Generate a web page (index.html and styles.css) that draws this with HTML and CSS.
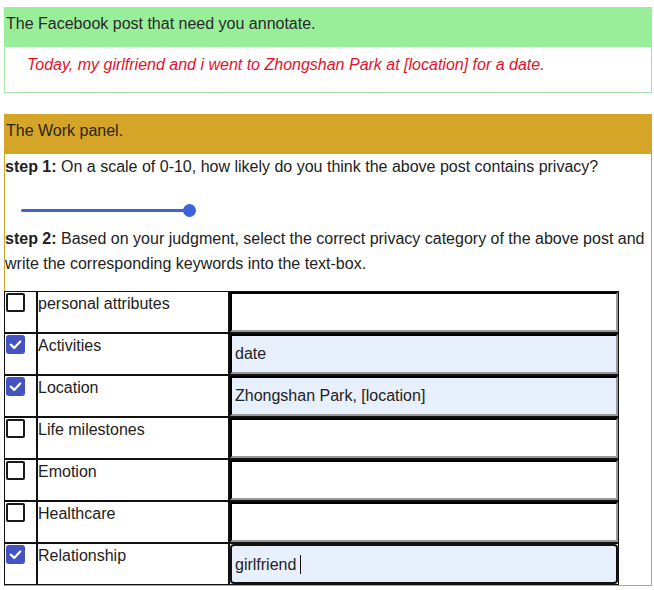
FILE: index.html
```html
<!DOCTYPE html>
<html>
<head>
<meta charset="utf-8">
<link rel="stylesheet" href="styles.css">
</head>
<body>
<div class="page">
  <section class="post">
    <div class="bar bar-green">The Facebook post that need you annotate.</div>
    <div class="post-body">Today, my girlfriend and i went to Zhongshan Park at [location] for a date.</div>
  </section>

  <section class="work">
    <div class="bar bar-gold">The Work panel.</div>
    <div class="work-body">
      <p class="step step1"><b>step 1:</b> On a scale of 0-10, how likely do you think the above post contains privacy?</p>
      <div class="slider">
        <div class="track"></div>
        <div class="thumb"></div>
      </div>
      <p class="step step2"><b>step 2:</b> Based on your judgment, select the correct privacy category of the above post and write the corresponding keywords into the text-box.</p>
      <table class="cats">
        <tr>
          <td class="c-box"><span class="cb"></span></td>
          <td class="c-label">personal attributes</td>
          <td class="c-input"><div class="field"></div></td>
        </tr>
        <tr>
          <td class="c-box"><span class="cb on"><svg viewBox="0 0 20 20"><path d="M5 10.2 L8.6 13.6 L15 6.8" /></svg></span></td>
          <td class="c-label">Activities</td>
          <td class="c-input"><div class="field filled">date</div></td>
        </tr>
        <tr>
          <td class="c-box"><span class="cb on"><svg viewBox="0 0 20 20"><path d="M5 10.2 L8.6 13.6 L15 6.8" /></svg></span></td>
          <td class="c-label">Location</td>
          <td class="c-input"><div class="field filled">Zhongshan Park, [location]</div></td>
        </tr>
        <tr>
          <td class="c-box"><span class="cb"></span></td>
          <td class="c-label">Life milestones</td>
          <td class="c-input"><div class="field"></div></td>
        </tr>
        <tr>
          <td class="c-box"><span class="cb"></span></td>
          <td class="c-label">Emotion</td>
          <td class="c-input"><div class="field"></div></td>
        </tr>
        <tr>
          <td class="c-box"><span class="cb"></span></td>
          <td class="c-label">Healthcare</td>
          <td class="c-input"><div class="field"></div></td>
        </tr>
        <tr>
          <td class="c-box"><span class="cb on"><svg viewBox="0 0 20 20"><path d="M5 10.2 L8.6 13.6 L15 6.8" /></svg></span></td>
          <td class="c-label">Relationship</td>
          <td class="c-input"><div class="field filled focus">girlfriend<span class="caret"></span></div></td>
        </tr>
      </table>
    </div>
  </section>
</div>
</body>
</html>
```

FILE: styles.css
```css
* { box-sizing: border-box; }
html, body { margin: 0; padding: 0; background: #fff; }
body {
  font-family: "Liberation Sans", Arial, sans-serif;
  font-size: 16px;
  color: #222;
}
.page {
  padding: 7px 2px 0 4px;
  width: 654px;
}
.bar {
  height: 40px;
  padding: 8px 2px 0 2px;
  font-size: 16px;
  line-height: 18px;
  color: #2a2a2a;
}
.bar-green { background: #99ee99; }
.bar-gold { background: #d5a527; color: #2b2410; }
.post-body {
  height: 46px;
  border: 1px solid #a9e2a9;
  border-top: none;
  padding: 9px 0 0 22px;
  color: #e3122a;
  font-style: italic;
  line-height: 18px;
}
.work {
  margin-top: 21px;
  width: 648px;
}
.work-body {
  border: 1px solid #d5a527;
  border-top: none;
  height: 432px;
}
.step {
  margin: 0;
  line-height: 25px;
  color: #222;
}
.step b { font-weight: bold; color: #222; }
.slider {
  position: relative;
  height: 47px;
  margin: 0;
}
.track {
  position: absolute;
  left: 16px;
  top: 30px;
  width: 170px;
  height: 3px;
  background: #3f63d4;
  border-radius: 2px;
}
.thumb {
  position: absolute;
  left: 178px;
  top: 25px;
  width: 13px;
  height: 13px;
  border-radius: 50%;
  background: #3d62d9;
}
.step2 { margin-bottom: 15px; }
.cats {
  border-collapse: separate;
  border-spacing: 0;
  margin-left: -1px;
}
.cats td {
  border: 1px solid #111;
  height: 42px;
  padding: 0;
  vertical-align: top;
}
.c-box { width: 33px; border-width: 2px 1px 1px 2px; }
.c-label {
  width: 192px;
  line-height: 20px;
  padding-top: 2px !important;
  color: #222;
}
.c-input { width: 390px; }
.cb {
  display: block;
  width: 19px;
  height: 19px;
  margin: 1px 0 0 1px;
  border: 2px solid #1a1a1a;
  border-radius: 2px;
  background: #fff;
}
.cb.on {
  border: none;
  background: #4353c2;
  border-radius: 3px;
}
.cb svg { display: block; width: 19px; height: 19px; }
.cb svg path { fill: none; stroke: #fff; stroke-width: 2.4; stroke-linecap: round; stroke-linejoin: round; }
.field {
  height: 40px;
  border: 2px inset #767676;
  border-color: #555 #999 #999 #555;
  background: #fff;
  padding: 9px 0 0 3px;
  line-height: 18px;
  color: #222;
}
.field.filled { background: #e8f0fe; }
.field.focus {
  border: 2px solid #111;
  border-radius: 4px;
}
.caret {
  display: inline-block;
  width: 1px;
  height: 19px;
  background: #111;
  vertical-align: -4px;
  margin-left: 4px;
}
```
